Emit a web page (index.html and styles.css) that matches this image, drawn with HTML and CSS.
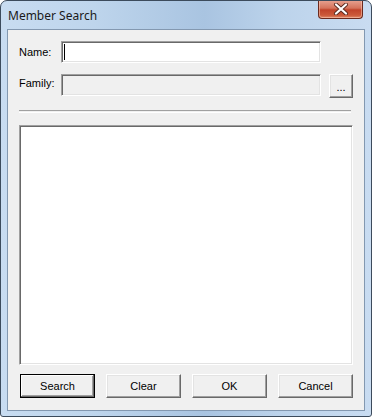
FILE: index.html
```html
<!DOCTYPE html>
<html lang="en">
<head>
    <meta charset="UTF-8">
    <title>Member Search</title>
    <link rel="stylesheet" href="styles.css">
</head>
<body>
    <div class="window">
        <div class="titlebar">
            <span class="title">Member Search</span>
            <button class="close" aria-label="Close">
                <svg width="16" height="12" viewBox="0 0 16 12">
                    <path d="M3 1.5 L13 10.5 M13 1.5 L3 10.5" stroke="#5a2a20" stroke-width="4" stroke-linecap="round"/>
                    <path d="M3 1.5 L13 10.5 M13 1.5 L3 10.5" stroke="#ffffff" stroke-width="2.2" stroke-linecap="round"/>
                </svg>
            </button>
        </div>
        <div class="client">
            <div class="row">
                <label for="name">Name:</label>
                <div class="field">
                    <input type="text" id="name">
                    <span class="caret"></span>
                </div>
            </div>
            <div class="row">
                <label for="family" class="lift">Family:</label>
                <input type="text" id="family" disabled>
                <button class="btn browse">...</button>
            </div>
            <div class="separator"></div>
            <div class="results"></div>
            <div class="buttons">
                <button class="btn default">Search</button>
                <button class="btn">Clear</button>
                <button class="btn">OK</button>
                <button class="btn">Cancel</button>
            </div>
        </div>
    </div>
</body>
</html>
```
FILE: styles.css
```css
body {
    margin: 0;
    font-family: "Liberation Sans", Arial, sans-serif;
    font-size: 11px;
}
.window {
    width: 372px;
    height: 417px;
    box-sizing: border-box;
    border: 1px solid #3c4b5c;
    border-radius: 7px 7px 3px 3px;
    background: linear-gradient(90deg, #c8dcf1 0%, #bed5ec 25%, #a9c4e1 55%, #bcd3eb 75%, #c9dcf1 100%);
    display: flex;
    flex-direction: column;
    overflow: hidden;
}
.titlebar {
    height: 28px;
    display: flex;
    justify-content: space-between;
    align-items: flex-start;
    padding: 0 8px 0 7px;
}
.title {
    font-family: "Noto Sans", "Open Sans", sans-serif;
    font-size: 12px;
    color: #1a1a1a;
    margin-top: 6px;
}
.close {
    width: 45px;
    height: 19px;
    margin-top: -1px;
    padding: 0;
    border: 1px solid #6b2a1e;
    border-top: none;
    border-radius: 0 0 4px 4px;
    background: linear-gradient(180deg, #e8a493 0%, #d5735c 45%, #c1432a 55%, #cc5a3a 85%, #e08a6a 100%);
    box-shadow: inset 0 0 0 1px rgba(255, 210, 190, 0.5);
    display: flex;
    align-items: center;
    justify-content: center;
}
.client {
    flex: 1;
    margin: 0 6px 5px 6px;
    border: 1px solid #8398b0;
    background: #f0f0f0;
    padding: 11px 10px 0 11px;
    display: flex;
    flex-direction: column;
}
.row {
    display: flex;
    align-items: flex-start;
    height: 22px;
    margin-bottom: 11px;
}
.row + .row {
    height: 24px;
    margin-bottom: 12px;
}
label {
    width: 42px;
    line-height: 22px;
    color: #000;
}
.lift {
    line-height: 19px;
}
.field {
    position: relative;
}
input {
    width: 260px;
    height: 22px;
    box-sizing: border-box;
    margin: 0;
    padding: 0 4px;
    font: inherit;
    background: #fff;
    border: 1px solid;
    border-color: #a0a0a0 #ffffff #ffffff #a0a0a0;
    box-shadow: inset 1px 1px 0 #696969, inset -1px -1px 0 #e3e3e3;
    outline: none;
}
input:disabled {
    background: #f0f0f0;
}
.caret {
    position: absolute;
    left: 3px;
    top: 3px;
    width: 1px;
    height: 16px;
    background: #000;
}
.btn {
    height: 24px;
    box-sizing: border-box;
    margin: 0;
    padding: 0;
    font: inherit;
    font-size: 11px;
    color: #000;
    background: #f0f0f0;
    border: 1px solid;
    border-color: #ffffff #696969 #696969 #ffffff;
    box-shadow: inset -1px -1px 0 #a0a0a0, inset 1px 1px 0 #e3e3e3;
}
.browse {
    width: 24px;
    margin-left: 8px;
    line-height: 24px;
}
.separator {
    width: 332px;
    height: 1px;
    border-top: 1px solid #a0a0a0;
    border-bottom: 1px solid #ffffff;
    margin-bottom: 12px;
}
.results {
    width: 334px;
    height: 240px;
    box-sizing: border-box;
    background: #fff;
    border: 1px solid;
    border-color: #a0a0a0 #ffffff #ffffff #a0a0a0;
    box-shadow: inset 1px 1px 0 #696969, inset -1px -1px 0 #e3e3e3;
}
.buttons {
    display: flex;
    justify-content: space-between;
    width: 333px;
    margin: 9px 0 0 1px;
}
.buttons .btn {
    width: 75px;
}
.default {
    border: 1px solid #000;
    box-shadow: inset -1px -1px 0 #696969, inset 1px 1px 0 #ffffff, inset -2px -2px 0 #a0a0a0;
}
```
